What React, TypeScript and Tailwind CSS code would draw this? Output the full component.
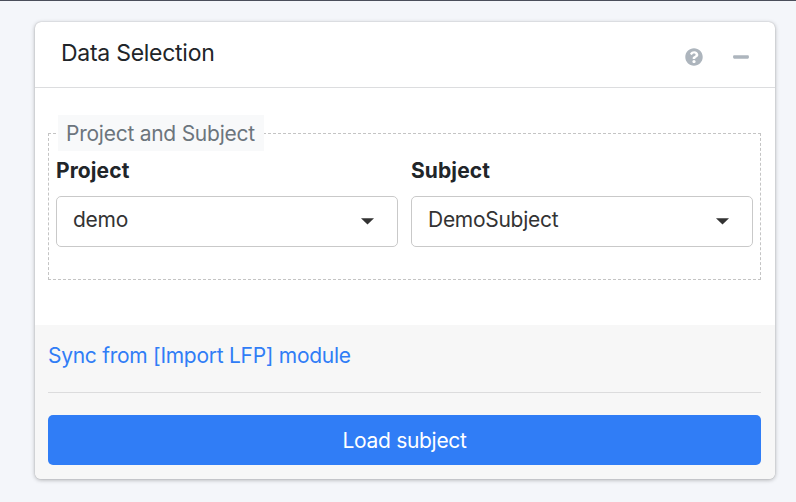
import React from "react";
import { FaQuestionCircle, FaMinus } from "react-icons/fa";

function SelectField({ label, value }: { label: string; value: string }) {
  return (
    <div className="flex-1">
      <div className="h-[30px] pt-px text-[21px] leading-[30px] font-bold tracking-[0.1px]">{label}</div>
      <button className="mt-[11px] flex h-[51px] w-full items-center justify-between rounded-[5px] border border-[#c9c9c9] bg-white pr-[23px] pb-[3px] pl-4 text-left text-[#333]">
        <span className="text-[21px] leading-[30px] tracking-[-0.28px]">{value}</span>
        <svg className="mt-[3px] h-[7px] w-[13px]" viewBox="0 0 13 7" fill="#333">
          <path d="M0 0.3h13L6.5 6.5z" />
        </svg>
      </button>
    </div>
  );
}

export default function App() {
  return (
    <div className="h-[502px] w-[796px] overflow-hidden border-t border-[#4b4f5b] bg-[#f4f6fa] pt-[21px] pl-[35px] font-['Inter','Liberation_Sans',sans-serif] text-[#212529]">
      <section className="flex h-[457px] w-[740px] flex-col overflow-hidden rounded-[6px] bg-white shadow-[0_0_1px_rgba(0,0,0,0.25),0_1px_4px_rgba(0,0,0,0.3)]">
        <header className="flex h-[66px] shrink-0 items-center justify-between border-b border-[#dcdddf] pr-[25px] pl-[26px]">
          <h3 className="-mt-[4px] text-[23px] leading-[30px] tracking-[-0.27px]">Data Selection</h3>
          <div className="mt-[4px] flex items-center gap-[29px] text-[#adb5bd]">
            <FaQuestionCircle size={18} />
            <FaMinus size={18} />
          </div>
        </header>
        <div className="h-[237px] shrink-0 pt-[45px] pr-[14px] pl-[13px]">
          <div className="h-[147px] border border-dashed border-[#c4c4c4] px-[7px]">
            <div className="relative -mt-[19px] flex h-9 w-[208px] items-center border-l-2 border-white bg-[#f8f9fa] pt-[2px] pl-2 text-[21px] tracking-[-0.25px] whitespace-nowrap text-[#6c757d]">
              Project and Subject
            </div>
            <div className="mt-[4px] flex gap-[13px]">
              <SelectField label="Project" value="demo" />
              <SelectField label="Subject" value="DemoSubject" />
            </div>
          </div>
        </div>
        <footer className="flex-1 bg-[#f7f7f7] pt-[16px] pr-[14px] pl-[13px]">
          <a className="block h-[30px] text-[21px] leading-[30px] tracking-[-0.28px] text-[#307df6]">Sync from [Import LFP] module</a>
          <hr className="mt-[21px] border-[#dcdcdd]" />
          <button className="mt-[22px] flex h-[50px] w-full items-center justify-center rounded-[5px] bg-[#307df6] pt-[2px] text-[21px] tracking-[-0.3px] text-white">
            Load subject
          </button>
        </footer>
      </section>
    </div>
  );
}
